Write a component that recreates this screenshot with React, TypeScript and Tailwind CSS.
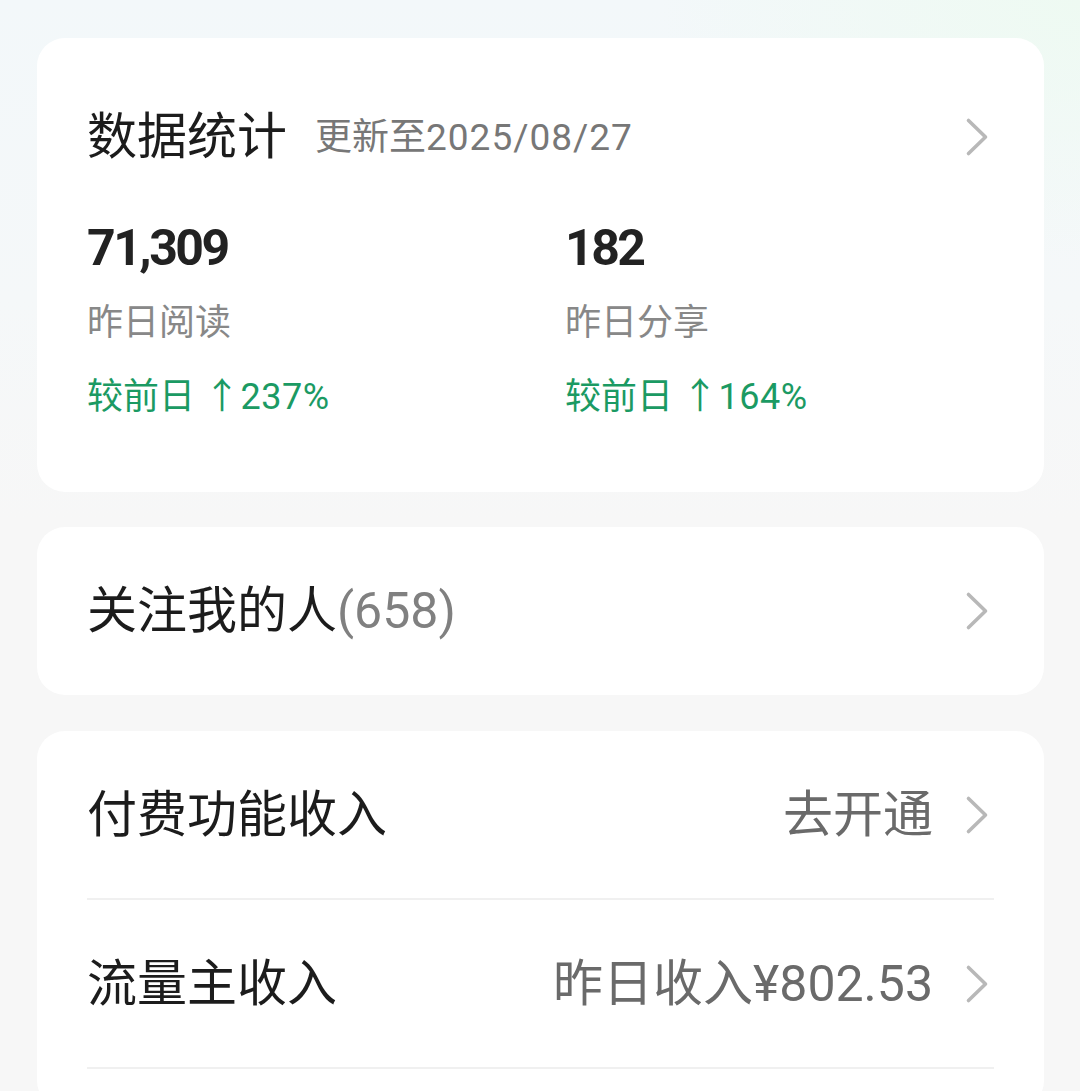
import React from "react";

const FONT = "font-['Roboto','Noto_Sans_CJK_SC',sans-serif]";

function Chevron() {
  return (
    <svg width="24" height="40" viewBox="0 0 24 40" className="shrink-0">
      <path
        d="M3.5 3.5 L20.5 20 L3.5 36.5"
        fill="none"
        stroke="#b8b8b8"
        strokeWidth="3.6"
        strokeLinecap="round"
        strokeLinejoin="round"
      />
    </svg>
  );
}

function Stat({ value, label, delta }: { value: string; label: string; delta: string }) {
  return (
    <div className="flex flex-col">
      <div className="text-[50px] leading-[60px] font-bold tracking-[-2.5px] text-[#222]">{value}</div>
      <div className="mt-[21px] text-[36px] leading-[48px] text-[#888]">{label}</div>
      <div className="mt-[26px] text-[36px] leading-[48px] text-[#1b9a63]">
        较前日 <span className="tracking-[0.5px]">↑{delta}</span>
      </div>
    </div>
  );
}

function Row({ title, right }: { title: string; right: string }) {
  return (
    <div className="flex h-[167px] items-center pl-[50px] pr-[55px]">
      <div className="text-[50px] leading-[60px] text-[#1c1c1c]">{title}</div>
      <div className="ml-auto mr-[32px] text-[50px] leading-[60px] text-[#6a6a6a]">{right}</div>
      <Chevron />
    </div>
  );
}

export default function App() {
  return (
    <div
      className={`${FONT} min-h-[1091px] w-[1080px] overflow-hidden bg-[radial-gradient(ellipse_420px_260px_at_100%_0%,#eefaf2,transparent),linear-gradient(180deg,#f3f8fa_0px,#f5f8f9_300px,#f7f7f7_520px)] pt-[38px] pl-[37px] pr-[36px]`}
    >
      {/* 数据统计 */}
      <div className="h-[454px] rounded-[28px] bg-white pt-[70px] pl-[50px] pr-[55px]">
        <div className="flex items-center">
          <div className="text-[50px] leading-[56px] text-[#1c1c1c]">数据统计</div>
          <div className="ml-[28px] mt-[2px] text-[37px] leading-[56px] text-[#777]">
            更新至<span className="tracking-[1px]">2025/08/27</span>
          </div>
          <div className="ml-auto">
            <Chevron />
          </div>
        </div>
        <div className="mt-[52px] grid grid-cols-[478px_1fr]">
          <Stat value="71,309" label="昨日阅读" delta="237%" />
          <Stat value="182" label="昨日分享" delta="164%" />
        </div>
      </div>

      {/* 关注我的人 */}
      <div className="mt-[35px] flex h-[168px] items-center rounded-[28px] bg-white pl-[50px] pr-[55px]">
        <div className="text-[50px] leading-[60px] text-[#1c1c1c]">
          关注我的人<span className="text-[#808080]">(658)</span>
        </div>
        <div className="ml-auto">
          <Chevron />
        </div>
      </div>

      {/* 收入 */}
      <div className="mt-[36px] rounded-[28px] bg-white pb-[40px]">
        <Row title="付费功能收入" right="去开通" />
        <div className="mx-[50px] h-[2px] bg-[#f0f0f0]" />
        <Row title="流量主收入" right="昨日收入¥802.53" />
        <div className="mx-[50px] h-[2px] bg-[#f0f0f0]" />
      </div>
    </div>
  );
}
